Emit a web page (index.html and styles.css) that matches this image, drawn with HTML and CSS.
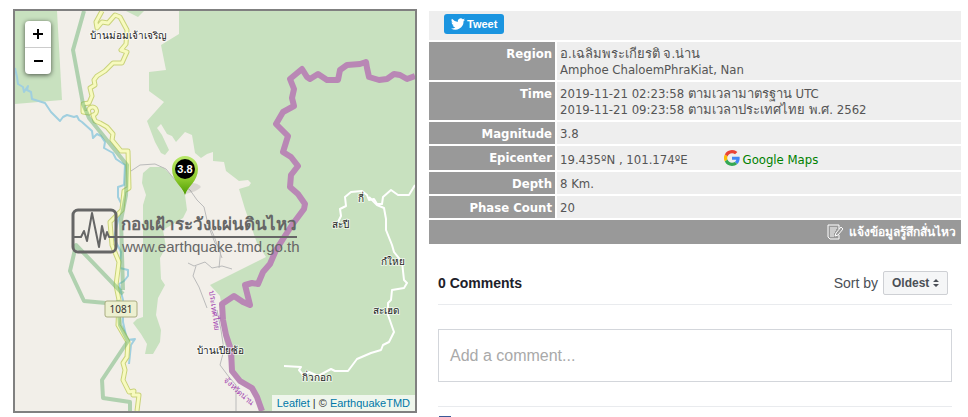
FILE: index.html
```html
<!DOCTYPE html>
<html lang="th">
<head>
    <meta charset="UTF-8">
    <meta name="viewport" content="width=device-width, initial-scale=1.0">
    <title>Earthquake - Amphoe ChaloemPhraKiat, Nan</title>
    <link rel="stylesheet" href="styles.css">
</head>
<body>
    <div class="page">
        <div class="map">
            <svg class="map-canvas" viewBox="15 11 400 400" preserveAspectRatio="xMidYMid slice">
                <defs>
                    <linearGradient id="pinFill" x1="0" y1="0" x2="0" y2="1">
                        <stop offset="0" stop-color="#b9e86a"/>
                        <stop offset="0.6" stop-color="#8cc92c"/>
                        <stop offset="1" stop-color="#4a9a00"/>
                    </linearGradient>
                </defs>

                <!-- forest -->
                <g class="forest">
                    <path d="M15 11H57L62 100L15 104Z"/>
                    <path d="M126 11L138 17L144 11Z"/>
                    <path d="M179 11V34L161 45L166 70L149 72V91L164 102L147 121L155 142L161 153L165 155L169 150L162 135L157 128L161 124L167 134L172 136L176 142L185 132L192 135L195 153L201 158L207 154L213 152L213 161L224 162L226 171L239 181L248 180L251 183L249 186L239 189L245 209L257 243L266 257L210 285L220 296L222 310L224 340L230 365L240 383L252 388L262 411H415V11Z"/>
                    <path d="M143 173L150 167L163 167L176 180L185 195L187 210L183 218L163 230L166 247L160 258L161 279L165 285L158 298L156 315L161 330L160 342L153 354L145 354L147 344L141 334L133 323L137 319L143 317V205L146 195L142 183Z"/>
                </g>

                <!-- rivers -->
                <path class="river" d="M15 68L17 77L18 84L23 87L24 92L28 86L27 90L31 92L32 99L45 103L51 112L60 121L63 117L67 115L74 117L77 116L79 120L82 122L92 131L93 138L97 134L101 136L105 142L104 148L113 153L116 159L125 165L124 185L118 187L118 197L122 205L117 225L114 238L121 252L120 268L128 270L128 276L124 281L119 284L123 300L123 322L127 340L135 339L131 345L129 364"/>

                <!-- roads -->
                <path class="road-edge" d="M102 11L96 22L97 28L102 22L108 23L115 15L120 17L127 30L126 44L121 50L127 52L122 63L113 63L105 71L97 76L94 80L95 85L90 88L92 96L89 103L83 104V112L89 113A4 4 0 1 1 93 115L95 121L100 123L107 127L113 134L112 140L121 151L128 151L129 188L124 191L122 210L110 222L112 245L119 262L116 285L119 300L118 325L128 342L127 357L123 363L125 370L123 380L129 392L134 391L133 395L139 395L137 411"/>
                <path class="road" d="M102 11L96 22L97 28L102 22L108 23L115 15L120 17L127 30L126 44L121 50L127 52L122 63L113 63L105 71L97 76L94 80L95 85L90 88L92 96L89 103L83 104V112L89 113A4 4 0 1 1 93 115L95 121L100 123L107 127L113 134L112 140L121 151L128 151L129 188L124 191L122 210L110 222L112 245L119 262L116 285L119 300L118 325L128 342L127 357L123 363L125 370L123 380L129 392L134 391L133 395L139 395L137 411"/>
                <g class="track">
                    <path d="M131 171L140 165L155 164L166 169L175 180L190 190L197 200L204 207L207 220L214 236L222 258"/>
                    <path d="M188 263L194 266L205 262L212 268L222 266L232 269M196 266L193 276L199 287L207 308"/>
                    <path d="M208 225L215 243L221 248L219 268M217 310L221 330L224 350L220 365L229 377L236 385V411"/>
                </g>

                <!-- park boundary -->
                <g class="park-line">
                    <path d="M84 11L73 50L83 104L89 118L127 165L126 195L121 220L123 290"/>
                    <path d="M123 294L76 245L70 271L84 301L106 303M118 300L120 325L128 341L102 380L103 398L130 402V411"/>
                </g>

                <!-- country border -->
                <path class="border-line" d="M415 76L407 79L400 75L394 74L387 79L379 80L369 77L367 68L366 62L360 64L347 65L340 70L338 80L327 80L318 74L310 79L307 77L302 69L290 79L294 89L292 98L294 106L283 112L276 124L288 136L283 152L291 157L298 166L291 175L290 187L298 194L305 204L304 209L292 225L283 239L276 250L270 264L263 272L258 284L252 283L245 285L250 305L243 302L234 296L222 304L223 320L226 335L231 350L232 371L240 381L252 388L257 397L262 411"/>

                <g class="village-road">
                    <path d="M415 185L409 195L398 195L391 190L383 197L382 204L377 204L374 199L369 200L367 195L362 191L351 192L345 197L346 206L340 209L341 216L338 222"/>
                    <path d="M369 197L377 205L384 208L386 219L386 230L392 245L394 252L402 262L404 280L407 283L404 288L392 290L391 300L388 303V315L394 332L389 342L383 345L381 350L371 353L357 359L348 371H335L331 369L318 376L309 372L304 376L299 370L301 367L284 366"/>
                </g>

                <rect class="shield" x="105" y="301" width="32" height="16" rx="2"/>
                <text class="shield-text" x="121" y="313">1081</text>

                <g class="place">
                    <text x="128" y="39">บ้านม่อมเจ้าเจริญ</text>
                    <text x="361" y="202">กี่</text>
                    <text x="340" y="228">สะปี</text>
                    <text x="393" y="265">กํใหย</text>
                    <text x="386" y="314">สะเฮด</text>
                    <text x="220" y="354">บ้านเปียซ้อ</text>
                    <text x="317" y="381">กิ่วกอก</text>
                </g>
                <g class="region-name">
                    <text transform="translate(209 291) rotate(82)">ประเทศไทย</text>
                    <text transform="translate(223 381) rotate(42)">จังหวัดน่าน</text>
                </g>

                <!-- station watermark -->
                <g class="watermark">
                    <rect x="73" y="210" width="43" height="42" rx="5"/>
                    <path d="M74 237H81L84 231L87 241L92 213L99 247L102 226L105 239L107 232L109 237H297"/>
                    <text class="watermark-title" x="121" y="230">กองเฝ้าระวังแผ่นดินไหว</text>
                    <text class="watermark-url" x="122" y="252">www.earthquake.tmd.go.th</text>
                </g>

                <!-- epicenter pin -->
                <path class="pin-shadow" d="M185 194L192 183Q198 183 201 187Q197 192 185 194Z"/>
                <path d="M185 195C182 186 172 181 172 169A13 13 0 0 1 198 169C198 181 188 186 185 195Z" fill="url(#pinFill)"/>
                <circle cx="185" cy="169" r="10" fill="#000"/>
                <text class="pin-text" x="185" y="173">3.8</text>
            </svg>

            <div class="zoom-control">
                <button type="button" aria-label="Zoom in">
                    <svg width="12" height="12" viewBox="0 0 12 12"><path d="M1 6H11M6 1V11"/></svg>
                </button>
                <button type="button" aria-label="Zoom out">
                    <svg width="12" height="12" viewBox="0 0 12 12"><path d="M2 6H11"/></svg>
                </button>
            </div>
            <div class="attribution"><a href="#">Leaflet</a> | © <a href="#">EarthquakeTMD</a></div>
        </div>

        <div class="detail">
            <div class="share">
                <a class="tweet" href="#">
                    <svg width="14" height="14" viewBox="0 0 24 24"><path d="M24 4.6a10 10 0 0 1-2.8.8 5 5 0 0 0 2.1-2.7 10 10 0 0 1-3.1 1.2 4.9 4.9 0 0 0-8.4 4.5A14 14 0 0 1 1.7 3.2a4.9 4.9 0 0 0 1.5 6.6 4.9 4.9 0 0 1-2.2-.6 4.9 4.9 0 0 0 4 4.9 5 5 0 0 1-2.2.1 4.9 4.9 0 0 0 4.6 3.4A9.9 9.9 0 0 1 0 19.5 14 14 0 0 0 21.5 7.1 10 10 0 0 0 24 4.6z"/></svg>
                    Tweet
                </a>
            </div>
            <table class="info">
                <tr>
                    <th scope="row">Region</th>
                    <td>อ.เฉลิมพระเกียรติ จ.น่าน<br>Amphoe ChaloemPhraKiat, Nan</td>
                </tr>
                <tr>
                    <th scope="row">Time</th>
                    <td>2019-11-21 02:23:58 ตามเวลามาตรฐาน UTC<br>2019-11-21 09:23:58 ตามเวลาประเทศไทย พ.ศ. 2562</td>
                </tr>
                <tr>
                    <th scope="row">Magnitude</th>
                    <td>3.8</td>
                </tr>
                <tr>
                    <th scope="row">Epicenter</th>
                    <td>
                        <div class="epicenter">
                            <span>19.435ºN , 101.174ºE</span>
                            <a class="gmaps" href="#">
                                <svg width="16" height="16" viewBox="0 0 48 48">
                                    <path fill="#ea4335" d="M24 9.5c3.5 0 6.7 1.2 9.2 3.6l6.9-6.9A24 24 0 0 0 2.6 13.2l8 6.2C12.4 13.7 17.7 9.5 24 9.5z"/>
                                    <path fill="#4285f4" d="M47 24.5c0-1.6-.2-3.1-.4-4.5H24v9h12.9c-.6 3-2.2 5.5-4.7 7.2l7.7 6C44.4 38 47 31.8 47 24.5z"/>
                                    <path fill="#fbbc05" d="M10.5 28.6a14 14 0 0 1 0-9.2l-8-6.2a24 24 0 0 0 0 21.6z"/>
                                    <path fill="#34a853" d="M24 48c6.5 0 11.9-2.1 15.9-5.8l-7.7-6c-2.2 1.5-4.9 2.3-8.2 2.3-6.3 0-11.6-4.2-13.5-9.9l-8 6.2A24 24 0 0 0 24 48z"/>
                                </svg>
                                Google Maps
                            </a>
                        </div>
                    </td>
                </tr>
                <tr>
                    <th scope="row">Depth</th>
                    <td>8 Km.</td>
                </tr>
                <tr>
                    <th scope="row">Phase Count</th>
                    <td>20</td>
                </tr>
            </table>
            <a class="report" href="#">
                <svg width="16" height="16" viewBox="0 0 16 16">
                    <path d="M12 5V1H1V13L3 15H12V11M3 4H10M3 6H9M3 8H8M3 10H7M3 12H7M8 12L9 9L14 3L16 5L11 11Z"/>
                </svg>
                แจ้งข้อมูลรู้สึกสั่นไหว
            </a>

            <div class="comments">
                <div class="comments-header">
                    <h2>0 Comments</h2>
                    <div class="sort">
                        <label for="sort">Sort by</label>
                        <div class="select-wrap">
                            <select id="sort">
                                <option>Oldest</option>
                            </select>
                            <svg width="6" height="8" viewBox="0 0 6 8"><path d="M3 0L6 3H0ZM0 5H6L3 8Z"/></svg>
                        </div>
                    </div>
                </div>
                <div class="comment-box">
                    <textarea rows="1" aria-label="Add a comment" placeholder="Add a comment..."></textarea>
                </div>
                <div class="plugin-footer"><span class="fb-icon"></span></div>
            </div>
        </div>
    </div>
</body>
</html>
```
FILE: styles.css
```css
* {
    box-sizing: border-box;
}

body {
    margin: 0;
    background-color: #fff;
    color: #555;
    font-family: "DejaVu Sans Condensed", "Noto Sans", sans-serif;
    font-size: 13px;
    line-height: 16px;
    overflow: hidden;
}

.page {
    display: grid;
    grid-template-columns: 404fr 532fr;
    gap: 12px;
    align-items: start;
    padding: 9px 7px 0 13px;
}

/* map */
.map {
    position: relative;
    aspect-ratio: 1;
    border: 2px solid #808080;
    background-color: #f2efe9;
    overflow: hidden;
}

.map-canvas {
    display: block;
    width: 100%;
    height: 100%;
    fill: none;
    stroke-linejoin: round;
}

.forest {
    fill: #c8e1bf;
}

.river {
    stroke: #a0cfdf;
    stroke-width: 2;
}

.road-edge {
    stroke: #c9d27a;
    stroke-width: 5;
}

.road {
    stroke: #f7fabf;
    stroke-width: 3;
}

.track {
    stroke: #bbb;
    stroke-width: 1;
}

.park-line {
    stroke: #5fae69;
    stroke-width: 4;
    stroke-opacity: 0.45;
}

.border-line {
    stroke: #b987b5;
    stroke-width: 6;
}

.village-road {
    stroke: #fff;
    stroke-width: 2;
}

.shield {
    fill: #edf0d0;
    stroke: #a9ac80;
}

.shield-text {
    fill: #333;
    font-family: "Noto Sans", sans-serif;
    font-size: 10px;
    text-anchor: middle;
}

.place {
    fill: #222;
    stroke: #fff;
    stroke-width: 2;
    stroke-opacity: 0.6;
    paint-order: stroke;
    font-size: 10px;
    text-anchor: middle;
}

.region-name {
    fill: #a13fb0;
    font-size: 8px;
}

.watermark rect,
.watermark path {
    stroke: #666;
    stroke-width: 2;
}

.watermark rect {
    stroke-width: 3;
}

.watermark text {
    fill: #666;
}

.watermark-title {
    font-size: 17px;
    font-weight: bold;
}

.watermark-url {
    font-family: "Liberation Sans", Arial, sans-serif;
    font-size: 15px;
}

.pin-shadow {
    fill: #000;
    opacity: 0.1;
}

.pin-text {
    fill: #fff;
    font-family: "Liberation Sans", Arial, sans-serif;
    font-size: 11px;
    font-weight: bold;
    text-anchor: middle;
}

.zoom-control {
    position: absolute;
    top: 10px;
    left: 10px;
    width: 26px;
    border-radius: 4px;
    background-color: #fff;
    box-shadow: 0 1px 5px rgba(0, 0, 0, 0.65);
}

.zoom-control button {
    display: flex;
    align-items: center;
    justify-content: center;
    width: 100%;
    height: 26px;
    padding: 0;
    border: none;
    background: none;
    cursor: pointer;
}

.zoom-control button:first-child {
    height: 27px;
    border-bottom: 1px solid #ccc;
}

.zoom-control svg {
    stroke: #000;
    stroke-width: 2;
}

.attribution {
    position: absolute;
    right: 0;
    bottom: 0;
    padding: 0 5px;
    background-color: rgba(255, 255, 255, 0.7);
    color: #333;
    font-family: "Liberation Sans", Arial, sans-serif;
    font-size: 11px;
}

.attribution a {
    color: #0078a8;
    text-decoration: none;
}

/* event detail */
.share {
    display: flex;
    margin-top: 2px;
    padding: 3px 15px 6px;
    background-color: #eee;
}

.tweet {
    display: flex;
    align-items: center;
    gap: 2px;
    height: 20px;
    padding: 0 7px;
    border-radius: 3px;
    background-color: #1b95e0;
    color: #fff;
    font-family: "Liberation Sans", Arial, sans-serif;
    font-size: 11px;
    font-weight: bold;
    text-decoration: none;
}

.tweet svg {
    fill: #fff;
}

.info {
    width: calc(100% + 4px);
    margin: 0 -2px;
    border-spacing: 2px;
}

.info th,
.info td {
    height: 22px;
    padding: 4px 3px 2px;
    vertical-align: top;
}

.info th {
    width: 126px;
    background-color: #999;
    color: #fff;
    text-align: right;
}

.info td {
    background-color: #eee;
}

.epicenter {
    display: flex;
    align-items: flex-end;
    gap: 36px;
    height: 18px;
}

.gmaps {
    display: flex;
    align-items: center;
    gap: 3px;
    color: green;
    text-decoration: none;
}

.gmaps svg {
    margin-bottom: 4px;
}

.gmaps {
    height: 16px;
}

.report {
    display: flex;
    align-items: center;
    justify-content: flex-end;
    gap: 6px;
    height: 24px;
    padding: 0 5px;
    background-color: #999;
    color: #fff;
    font-size: 12px;
    font-weight: bold;
    text-decoration: none;
}

.report svg {
    fill: none;
    stroke: #fff;
}

/* comments */
.comments {
    padding: 18px 9px 0;
    font-family: "Liberation Sans", Arial, sans-serif;
}

.comments-header {
    display: flex;
    align-items: center;
    justify-content: space-between;
    height: 43px;
    padding-right: 4px;
    border-bottom: 1px solid #e9ebee;
}

.comments-header h2 {
    margin: 0;
    color: #1d2129;
    font-size: 14px;
}

.sort {
    display: flex;
    align-items: center;
    gap: 5px;
    color: #4b4f56;
    font-size: 14px;
}

.select-wrap {
    position: relative;
}

.select-wrap select {
    display: block;
    height: 24px;
    padding: 0 17px 0 8px;
    border: 1px solid #ced0d4;
    border-radius: 2px;
    background-color: #f5f6f7;
    color: #4b4f56;
    font-family: inherit;
    font-size: 12px;
    font-weight: bold;
    appearance: none;
}

.select-wrap svg {
    position: absolute;
    top: 8px;
    right: 9px;
    fill: #4b4f56;
    pointer-events: none;
}

.comment-box {
    padding: 24px 0;
    border-bottom: 1px solid #e9ebee;
}

.comment-box textarea {
    display: block;
    width: 100%;
    height: 53px;
    padding: 16px 11px;
    border: 1px solid #d3d6db;
    font-family: inherit;
    font-size: 16px;
    line-height: 19px;
    resize: none;
}

.comment-box textarea::placeholder {
    color: #a9a9a9;
}

.plugin-footer {
    padding-top: 9px;
}

.fb-icon {
    display: block;
    width: 12px;
    height: 12px;
    margin-left: 1px;
    background-color: #3b5998;
}
```
